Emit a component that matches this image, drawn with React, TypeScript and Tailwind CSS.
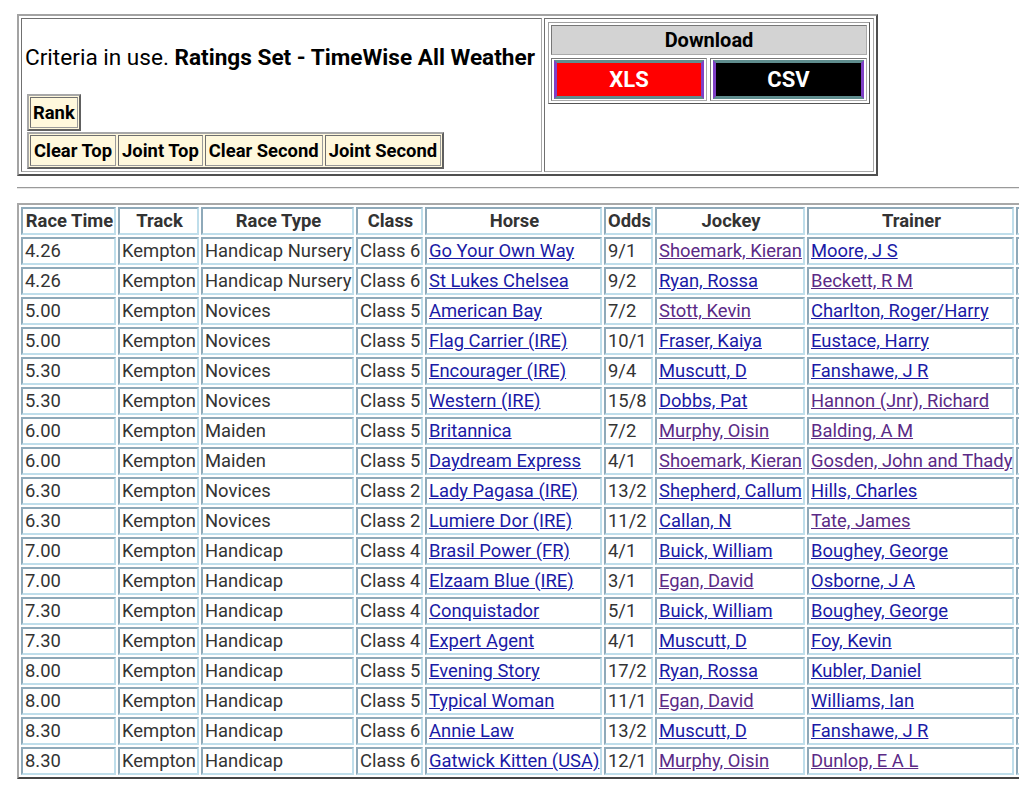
import React from "react";

type Row = [string, string, string, string, string, string, boolean, string, boolean];

const rows: Row[] = [
  ["4.26", "Handicap Nursery", "Class 6", "Go Your Own Way", "9/1", "Shoemark, Kieran", true, "Moore, J S", false],
  ["4.26", "Handicap Nursery", "Class 6", "St Lukes Chelsea", "9/2", "Ryan, Rossa", false, "Beckett, R M", true],
  ["5.00", "Novices", "Class 5", "American Bay", "7/2", "Stott, Kevin", true, "Charlton, Roger/Harry", false],
  ["5.00", "Novices", "Class 5", "Flag Carrier (IRE)", "10/1", "Fraser, Kaiya", false, "Eustace, Harry", false],
  ["5.30", "Novices", "Class 5", "Encourager (IRE)", "9/4", "Muscutt, D", false, "Fanshawe, J R", false],
  ["5.30", "Novices", "Class 5", "Western (IRE)", "15/8", "Dobbs, Pat", false, "Hannon (Jnr), Richard", true],
  ["6.00", "Maiden", "Class 5", "Britannica", "7/2", "Murphy, Oisin", true, "Balding, A M", true],
  ["6.00", "Maiden", "Class 5", "Daydream Express", "4/1", "Shoemark, Kieran", true, "Gosden, John and Thady", true],
  ["6.30", "Novices", "Class 2", "Lady Pagasa (IRE)", "13/2", "Shepherd, Callum", false, "Hills, Charles", false],
  ["6.30", "Novices", "Class 2", "Lumiere Dor (IRE)", "11/2", "Callan, N", false, "Tate, James", true],
  ["7.00", "Handicap", "Class 4", "Brasil Power (FR)", "4/1", "Buick, William", false, "Boughey, George", false],
  ["7.00", "Handicap", "Class 4", "Elzaam Blue (IRE)", "3/1", "Egan, David", true, "Osborne, J A", false],
  ["7.30", "Handicap", "Class 4", "Conquistador", "5/1", "Buick, William", false, "Boughey, George", false],
  ["7.30", "Handicap", "Class 4", "Expert Agent", "4/1", "Muscutt, D", false, "Foy, Kevin", false],
  ["8.00", "Handicap", "Class 5", "Evening Story", "17/2", "Ryan, Rossa", false, "Kubler, Daniel", false],
  ["8.00", "Handicap", "Class 5", "Typical Woman", "11/1", "Egan, David", true, "Williams, Ian", false],
  ["8.30", "Handicap", "Class 6", "Annie Law", "13/2", "Muscutt, D", false, "Fanshawe, J R", false],
  ["8.30", "Handicap", "Class 6", "Gatwick Kitten (USA)", "12/1", "Murphy, Oisin", true, "Dunlop, E A L", true],
];

const cellCls =
  "border-2 border-t-[#8ea9b9] border-l-[#8ea9b9] border-b-[#bfdeeb] border-r-[#bfdeeb] pl-[2px] flex items-center whitespace-nowrap text-[18.4px] leading-[24px] text-[#333]";

const link = "text-[#1a1aa6] underline";
const visited = "text-[#5b2a86] underline";

function Cell({ children, head }: { children?: React.ReactNode; head?: boolean }) {
  return <div className={cellCls + (head ? " justify-center font-bold pl-0" : "")}>{children}</div>;
}

function CreamBtn({ label, pad }: { label: string; pad?: boolean }) {
  return (
    <div
      className={
        "border border-t-[#6f6f6f] border-l-[#6f6f6f] border-b-[#9a9a9a] border-r-[#9a9a9a] leading-[29px] text-[18.4px] font-bold text-black whitespace-nowrap " +
        (pad ? "px-[3px]" : "px-[2px]")
      }
    >
      {label}
    </div>
  );
}

export default function App() {
  const heads = ["Race Time", "Track", "Race Type", "Class", "Horse", "Odds", "Jockey", "Trainer", ""];
  return (
    <div className="w-[1019px] h-[803px] overflow-hidden bg-white font-['Roboto',_'Liberation_Sans',_sans-serif]">
      {/* Top section */}
      <div className="ml-[17px] mt-[14px] w-[861px] border-2 border-t-[#a3a3a3] border-l-[#a3a3a3] border-b-[#4f4f4f] border-r-[#4f4f4f] p-[2px] flex gap-[2px]">
        <div className="w-[521px] h-[154px] border border-t-[#707070] border-l-[#707070] border-b-[#a8a8a8] border-r-[#a8a8a8] pl-[3px]">
          <div className="pt-[27px] text-[22.6px] leading-[24px] text-black whitespace-nowrap">
            Criteria in use. <b>Ratings Set - TimeWise All Weather</b>
          </div>
          <div className="mt-[24px] ml-[2px] inline-flex border-2 border-t-[#a8a8a8] border-l-[#a8a8a8] border-b-[#606060] border-r-[#606060] bg-[#fff8dc] p-[1px]">
            <CreamBtn label="Rank" />
          </div>
          <div className="ml-[2px] mt-[1px] w-max flex gap-[2px] border-2 border-t-[#a8a8a8] border-l-[#a8a8a8] border-b-[#606060] border-r-[#606060] bg-[#fff8dc] p-[1px]">
            <CreamBtn label="Clear Top" pad />
            <CreamBtn label="Joint Top" pad />
            <CreamBtn label="Clear Second" pad />
            <CreamBtn label="Joint Second" pad />
          </div>
        </div>
        <div className="w-[330px] h-[154px] border border-t-[#707070] border-l-[#707070] border-b-[#a8a8a8] border-r-[#a8a8a8] p-[3px]">
          <div className="border border-t-[#a0a0a0] border-l-[#a0a0a0] border-b-[#555] border-r-[#555] p-[2px]">
            <div className="h-[30px] bg-[#d3d3d3] border border-t-[#777] border-l-[#777] border-b-[#aaa] border-r-[#aaa] flex items-center justify-center text-[20px] font-bold text-black">
              Download
            </div>
            <div className="mt-[3px] flex gap-[3px]">
              <div className="w-[156px] h-[43px] border border-t-[#777] border-l-[#777] border-b-[#aaa] border-r-[#aaa] px-[2px] py-[1px]">
                <div className="h-[39px] border-[3px] border-x-[#7f40c6] border-y-[#5f8d8e] bg-[#ff0000] flex items-center justify-center text-white text-[22px] font-bold">
                  XLS
                </div>
              </div>
              <div className="w-[157px] h-[43px] border border-t-[#777] border-l-[#777] border-b-[#aaa] border-r-[#aaa] px-[2px] py-[1px]">
                <div className="h-[39px] border-[3px] border-x-[#7f40c6] border-y-[#5f8d8e] bg-black flex items-center justify-center text-white text-[22px] font-bold">
                  CSV
                </div>
              </div>
            </div>
          </div>
        </div>
      </div>

      {/* hr */}
      <div className="ml-[17px] mt-[11px] w-[1010px] border-t border-t-[#9a9a9a] border-b border-b-[#e6e6e6]" />

      {/* Main table */}
      <div className="ml-[17px] mt-[14px] w-max grid grid-cols-[95px_81px_153px_67px_177px_49px_150px_207px_97px] auto-rows-[28px] gap-[2px] p-[2px] border-2 border-t-[#a8a8a8] border-l-[#a8a8a8] border-b-[#444] border-r-[#444]">
        {heads.map((h, i) => (
          <Cell key={i} head>
            {h}
          </Cell>
        ))}
        {rows.map((r, i) => (
          <React.Fragment key={i}>
            <Cell>{r[0]}</Cell>
            <Cell>Kempton</Cell>
            <Cell>{r[1]}</Cell>
            <Cell>{r[2]}</Cell>
            <Cell>
              <a className={link}>{r[3]}</a>
            </Cell>
            <Cell>{r[4]}</Cell>
            <Cell>
              <a className={r[6] ? visited : link}>{r[5]}</a>
            </Cell>
            <Cell>
              <a className={r[8] ? visited : link}>{r[7]}</a>
            </Cell>
            <Cell></Cell>
          </React.Fragment>
        ))}
      </div>
    </div>
  );
}
